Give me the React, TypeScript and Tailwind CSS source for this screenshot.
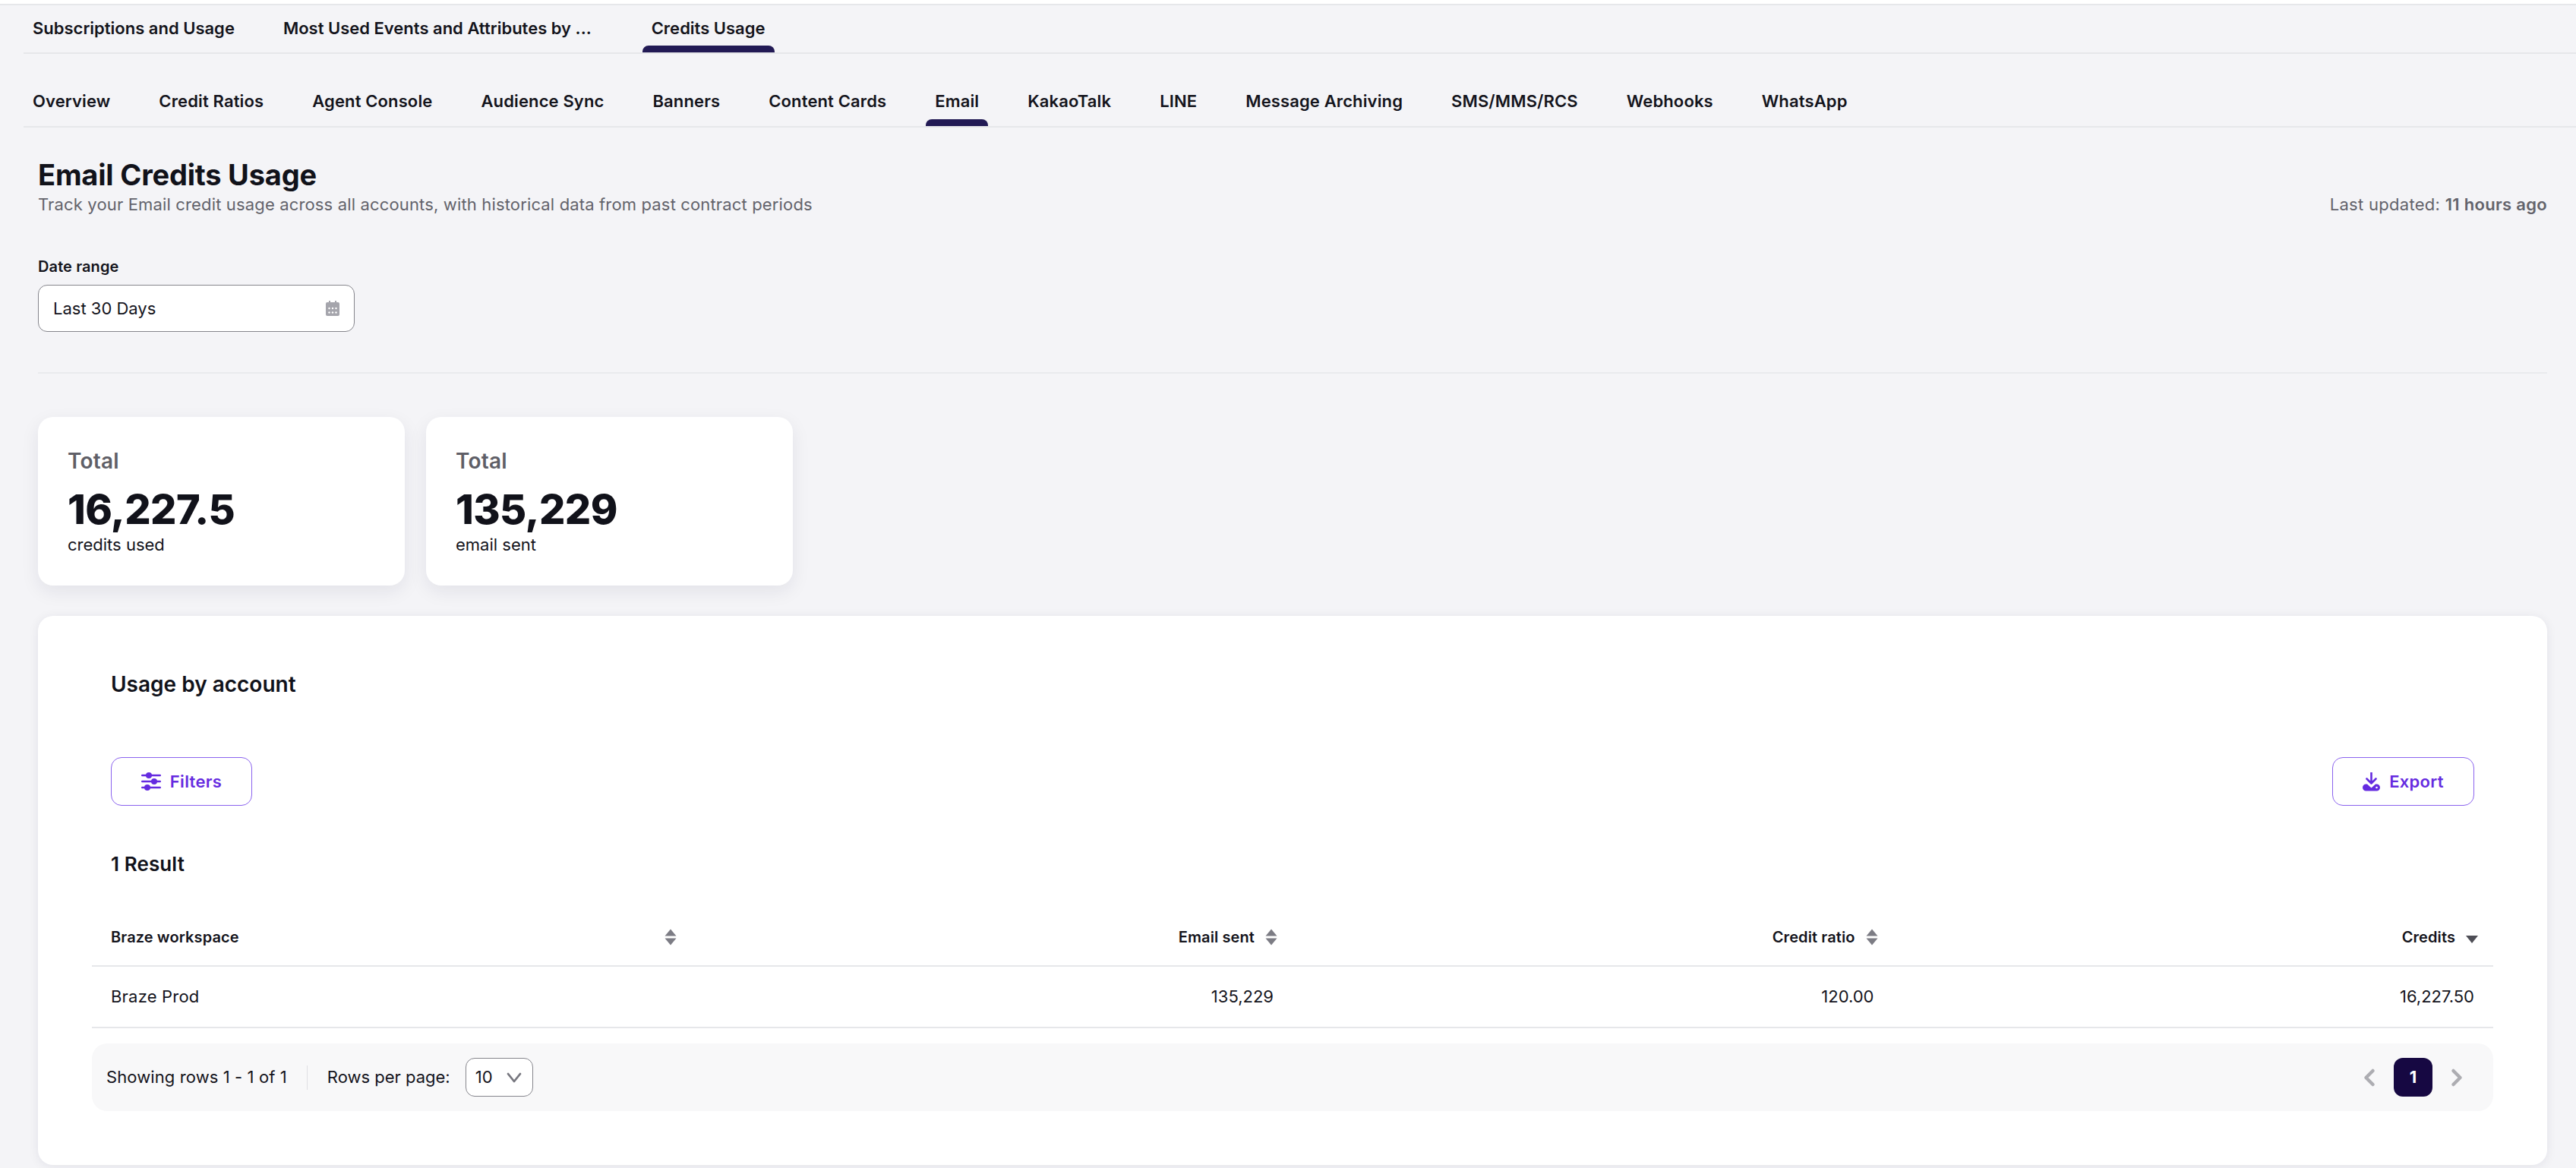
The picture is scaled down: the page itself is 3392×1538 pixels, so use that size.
import React from "react";
import { ChevronLeft, ChevronRight } from "lucide-react";

const topTabs = [
    { label: "Subscriptions and Usage" },
    { label: "Most Used Events and Attributes by ...", extra: "mr-[15px]" },
    { label: "Credits Usage", active: true },
];

const channelTabs = [
    { label: "Overview" },
    { label: "Credit Ratios" },
    { label: "Agent Console" },
    { label: "Audience Sync" },
    { label: "Banners" },
    { label: "Content Cards" },
    { label: "Email", active: true },
    { label: "KakaoTalk" },
    { label: "LINE" },
    { label: "Message Archiving" },
    { label: "SMS/MMS/RCS" },
    { label: "Webhooks" },
    { label: "WhatsApp" },
];

interface Tab {
    label: string;
    active?: boolean;
    extra?: string;
}

function TabRow({ tabs, className }: { tabs: Tab[]; className: string }) {
    return (
        <div className={`flex gap-[40px] pl-[31px] ${className}`}>
            {tabs.map((tab) => (
                <div key={tab.label} className={`relative flex items-center px-[12px] text-[22px] font-semibold text-[#14141c] ${tab.extra ?? ""}`}>
                    <span className="-mt-[2px]">{tab.label}</span>
                    {tab.active && (
                        <div className="absolute bottom-0 left-0 right-0 h-[9px] rounded-t-[8px] bg-[#221a55]" />
                    )}
                </div>
            ))}
        </div>
    );
}

function SortIcon() {
    return (
        <svg width="16" height="22" viewBox="0 0 16 22" className="shrink-0">
            <path d="M8 0.5 L15.5 9.5 H0.5 Z" fill="#7c7c84" />
            <path d="M8 21.5 L15.5 12.5 H0.5 Z" fill="#7c7c84" />
        </svg>
    );
}

function StatCard({ value, caption }: { value: string; caption: string }) {
    return (
        <div className="h-[222px] w-[483px] rounded-[20px] bg-white pl-[39px] pt-[38px] shadow-[0_8px_24px_rgba(30,30,60,0.08)]">
            <div className="text-[28px] leading-[40px] font-semibold tracking-[0.2px] text-[#5f5f67]">Total</div>
            <div className="mt-[12px] text-[54px] leading-[64px] font-extrabold tracking-[-0.6px] text-[#11121a]">{value}</div>
            <div className="mt-[1px] text-[22px] leading-[26px] text-[#14141c]">{caption}</div>
        </div>
    );
}

function OutlineButton({ icon, label, width }: { icon: React.ReactNode; label: string; width: string }) {
    return (
        <button className={`flex h-[64px] items-center justify-center gap-[12px] rounded-[14px] border-[1.5px] border-[#8b63ee] text-[22px] font-semibold tracking-[0.3px] text-[#652be0] ${width}`}>
            {icon}
            {label}
        </button>
    );
}

export default function App() {
    return (
        <div
            className="h-[1538px] overflow-hidden border-t-[5px] border-white bg-[#f4f4f7]"
            style={{ fontFamily: '"Inter", "Noto Sans", sans-serif' }}
        >
            <div className="border-t-2 border-[#e6e7ea]">
                <div className="ml-[31px] border-b-2 border-[#e6e7ea]">
                    <div className="-ml-[31px]">
                        <TabRow tabs={topTabs} className="h-[62px]" />
                    </div>
                </div>
            </div>
            <div className="ml-[31px] mt-[32px] border-b-2 border-[#e6e7ea]">
                <div className="-ml-[31px]">
                    <TabRow tabs={channelTabs} className="h-[63px] tracking-[0.13px]" />
                </div>
            </div>

            <div className="pl-[50px] pr-[38px]">
                <div className="mt-[39px] flex items-end justify-between">
                    <div>
                        <h1 className="text-[38px] leading-[46px] font-bold tracking-[-0.2px] text-[#11121a]">Email Credits Usage</h1>
                        <p className="mt-[2px] text-[22px] leading-[28px] tracking-[0.15px] text-[#63636b]">
                            Track your Email credit usage across all accounts, with historical data from past contract periods
                        </p>
                    </div>
                    <p className="text-[22px] leading-[28px] tracking-[0.3px] text-[#63636b]">
                        Last updated: <span className="font-semibold">11 hours ago</span>
                    </p>
                </div>

                <div className="mt-[55px] text-[20px] leading-[26px] font-semibold tracking-[0.1px] text-[#14141c]">Date range</div>
                <div className="mt-[11px] flex h-[62px] w-[417px] items-center justify-between rounded-[12px] border-[1.5px] border-[#85858c] bg-white pl-[19px] pr-[19px] text-[22px] text-[#14141c]">
                    <span>Last 30 Days</span>
                    <svg width="18" height="20" viewBox="0 0 18 20">
                        <path fill="#a5a5ac" d="M4 0h2v2h6V0h2v2h2a2 2 0 0 1 2 2v14a2 2 0 0 1-2 2H2a2 2 0 0 1-2-2V4a2 2 0 0 1 2-2h2V0Z" />
                        <g fill="#ffffff">
                            <circle cx="4.5" cy="10" r="1.2" />
                            <circle cx="9" cy="10" r="1.2" />
                            <circle cx="13.5" cy="10" r="1.2" />
                            <circle cx="4.5" cy="15.5" r="1.2" />
                            <circle cx="9" cy="15.5" r="1.2" />
                            <circle cx="13.5" cy="15.5" r="1.2" />
                        </g>
                    </svg>
                </div>

                <div className="mt-[53px] border-t-2 border-[#e9eaed]" />

                <div className="mt-[57px] flex gap-[28px]">
                    <StatCard value="16,227.5" caption="credits used" />
                    <StatCard value="135,229" caption="email sent" />
                </div>

                <div className="mt-[40px] h-[723px] rounded-[20px] bg-white px-[71px] pt-[70px] shadow-[0_2px_14px_rgba(30,30,60,0.08)]">
                    <div className="px-[25px]">
                        <h2 className="text-[28px] leading-[40px] font-semibold text-[#11121a]">Usage by account</h2>
                        <div className="mt-[76px] flex justify-between">
                            <OutlineButton
                                label="Filters"
                                width="w-[186px]"
                                icon={
                                    <svg width="26" height="24" viewBox="0 0 26 24" fill="#652be0">
                                        <rect x="0" y="2.8" width="26" height="2.4" rx="1.2" />
                                        <rect x="0" y="10.8" width="26" height="2.4" rx="1.2" />
                                        <rect x="0" y="18.8" width="26" height="2.4" rx="1.2" />
                                        <circle cx="10" cy="4" r="4" />
                                        <circle cx="17" cy="12" r="4" />
                                        <circle cx="8" cy="20" r="4" />
                                    </svg>
                                }
                            />
                            <OutlineButton
                                label="Export"
                                width="w-[187px]"
                                icon={
                                    <svg width="23" height="25" viewBox="0 0 23 25" fill="none">
                                        <path d="M11.5 0V13.5M5.5 8.5L11.5 14.5L17.5 8.5" stroke="#652be0" strokeWidth="2.6" strokeLinecap="round" strokeLinejoin="round" />
                                        <path fill="#652be0" d="M4.5 15.5H6L11.5 20.5L17 15.5H18.5A4.5 4.5 0 0 1 18.5 24.5H4.5A4.5 4.5 0 0 1 4.5 15.5Z" />
                                        <circle cx="18.5" cy="20" r="1.3" fill="#ffffff" />
                                    </svg>
                                }
                            />
                        </div>
                        <div className="mt-[60px] text-[26px] leading-[34px] font-semibold tracking-[0.1px] text-[#11121a]">1 Result</div>
                    </div>

                    <div className="mt-[42px] grid h-[76px] grid-cols-4 items-center border-b-2 border-[#e6e7ea] text-[20px] font-semibold tracking-[0.1px] text-[#14141c]">
                        <div className="flex items-center justify-between pl-[25px] pr-[21px]">
                            Braze workspace
                            <SortIcon />
                        </div>
                        <div className="flex items-center justify-end gap-[14px] pr-[20px]">
                            Email sent
                            <SortIcon />
                        </div>
                        <div className="flex items-center justify-end gap-[14px] pr-[20px]">
                            Credit ratio
                            <SortIcon />
                        </div>
                        <div className="flex items-center justify-end gap-[14px] pr-[20px]">
                            Credits
                            <svg width="16" height="10" viewBox="0 0 16 10" className="mt-[6px] shrink-0">
                                <path d="M8 10 L16 0 H0 Z" fill="#4e4e56" />
                            </svg>
                        </div>
                    </div>
                    <div className="grid h-[81px] grid-cols-4 items-center border-b-2 border-[#e6e7ea] text-[22px] text-[#14141c]">
                        <div className="pl-[25px] tracking-[0.2px]">Braze Prod</div>
                        <div className="pr-[25px] text-right">135,229</div>
                        <div className="pr-[25px] text-right">120.00</div>
                        <div className="pr-[25px] text-right">16,227.50</div>
                    </div>

                    <div className="mt-[20px] flex h-[89px] items-center justify-between rounded-[20px] bg-[#f8f8f9] pl-[19px] pr-[30px] text-[22px] text-[#14141c]">
                        <div className="flex items-center">
                            <span className="tracking-[0.1px]">Showing rows 1 - 1 of 1</span>
                            <div className="mx-[26px] h-[32px] w-[1px] bg-[#dfdfe3]" />
                            <span>Rows per page:</span>
                            <div className="ml-[20px] flex h-[51px] w-[89px] items-center justify-between rounded-[12px] border-[1.5px] border-[#85858c] bg-white pl-[12px] pr-[14px]">
                                10
                                <svg width="20" height="14" viewBox="0 0 20 14" fill="none">
                                    <path d="M2 2L10 12L18 2" stroke="#77777f" strokeWidth="2.8" strokeLinecap="round" strokeLinejoin="round" />
                                </svg>
                            </div>
                        </div>
                        <div className="flex items-center gap-[14px]">
                            <ChevronLeft className="h-[36px] w-[36px] text-[#adadb2]" strokeWidth={3} />
                            <div className="flex h-[51px] w-[51px] items-center justify-center rounded-[12px] bg-[#160842] font-bold text-white">1</div>
                            <ChevronRight className="h-[36px] w-[36px] text-[#adadb2]" strokeWidth={3} />
                        </div>
                    </div>
                </div>
            </div>
        </div>
    );
}
